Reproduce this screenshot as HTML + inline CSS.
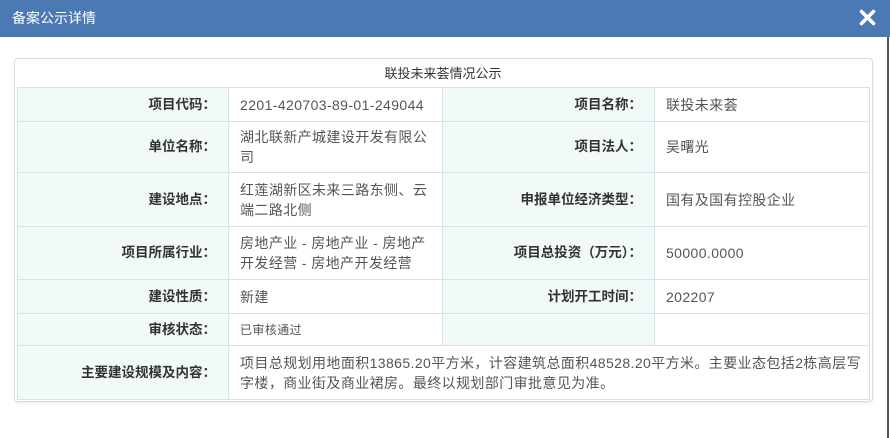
<!DOCTYPE html>
<html><head><meta charset="utf-8"><style>
*{margin:0;padding:0;box-sizing:border-box}
body{width:890px;height:438px;background:#fff;position:relative;overflow:hidden;font-family:"Liberation Sans","Noto Sans CJK SC",sans-serif;font-size:14px;color:#555}
.hd{position:absolute;left:0;top:0;width:890px;height:37px;background:#4b79b4;color:#fff;font-size:14px;line-height:36px;padding-left:12px}
.x{position:absolute;right:14px;top:9px}
.rl{position:absolute;left:887px;top:37px;width:2px;height:401px;background:#555}
.panel{position:absolute;left:14px;top:58px;width:859px;height:344px;border:1px solid #d5dde3;border-radius:4px;box-shadow:0 1px 3px #e5ecef}
.ttl{position:absolute;left:17px;top:61px;width:852px;height:26px;text-align:center;line-height:26px;color:#333;font-size:13px}
table{position:absolute;left:17px;top:87px;width:853px;border-collapse:collapse}
td{border:1px solid #d9e1e4;line-height:20px;vertical-align:middle}
td.l{background:#f2f9f9;text-align:right;font-weight:bold;color:#333;padding-right:12px;font-size:13.5px}
td.v{padding-left:11px;padding-right:14px;letter-spacing:0.4px}
</style></head><body>
<div class="hd">备案公示详情</div>
<svg class="x" width="17" height="17" viewBox="0 0 17 17"><path d="M2.5 2.5L14.5 14.5M14.5 2.5L2.5 14.5" stroke="#fff" stroke-width="3.6" stroke-linecap="round"/></svg>
<div class="rl"></div>
<div class="panel"></div>
<div class="ttl">联投未来荟情况公示</div>
<table>
<colgroup><col style="width:212px"><col style="width:214px"><col style="width:212px"><col style="width:215px"></colgroup>
<tr style="height:34px"><td class="l">项目代码：</td><td class="v">2201-420703-89-01-249044</td><td class="l">项目名称：</td><td class="v">联投未来荟</td></tr>
<tr style="height:51px"><td class="l">单位名称：</td><td class="v">湖北联新产城建设开发有限公司</td><td class="l">项目法人：</td><td class="v">吴曙光</td></tr>
<tr style="height:54px"><td class="l">建设地点：</td><td class="v">红莲湖新区未来三路东侧、云端二路北侧</td><td class="l">申报单位经济类型：</td><td class="v">国有及国有控股企业</td></tr>
<tr style="height:53px"><td class="l">项目所属行业：</td><td class="v">房地产业 - 房地产业 - 房地产开发经营 - 房地产开发经营</td><td class="l">项目总投资（万元）：</td><td class="v">50000.0000</td></tr>
<tr style="height:34px"><td class="l">建设性质：</td><td class="v">新建</td><td class="l">计划开工时间：</td><td class="v">202207</td></tr>
<tr style="height:32px"><td class="l">审核状态：</td><td class="v" style="font-size:12px">已审核通过</td><td class="l"></td><td class="v"></td></tr>
<tr style="height:54px"><td class="l">主要建设规模及内容：</td><td class="v" colspan="3" style="padding-right:4px;white-space:nowrap">项目总规划用地面积13865.20平方米，计容建筑总面积48528.20平方米。主要业态包括2栋高层写<br>字楼，商业街及商业裙房。最终以规划部门审批意见为准。</td></tr>
</table>
</body></html>
